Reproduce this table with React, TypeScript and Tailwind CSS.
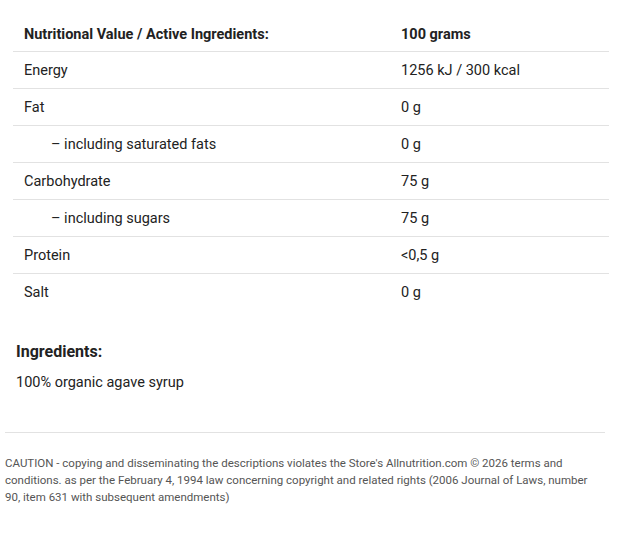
import React from "react";

const rows: [string, string, boolean][] = [
  ["Energy", "1256 kJ / 300 kcal", false],
  ["Fat", "0 g", false],
  ["– including saturated fats", "0 g", true],
  ["Carbohydrate", "75 g", false],
  ["– including sugars", "75 g", true],
  ["Protein", "<0,5 g", false],
  ["Salt", "0 g", false],
];

export default function App() {
  return (
    <div className="w-[623px] h-[534px] bg-white text-[#222] font-['Roboto',sans-serif]">
      <div className="px-[5px]">
        <div className="pl-[8px] pr-[9px] pt-[15px]">
          <table className="w-full border-collapse text-[14.5px]">
            <tbody>
              <tr className="border-b border-[#e2e2e2]">
                <td className="w-[377px] h-[36px] pl-[11px] pt-[5px] font-bold">Nutritional Value / Active Ingredients:</td>
                <td className="h-[36px] pl-[11px] pt-[5px] font-bold">100 grams</td>
              </tr>
              {rows.map(([label, value, indent], i) => (
                <tr key={label} className={i < rows.length - 1 ? "border-b border-[#e2e2e2]" : ""}>
                  <td className={"h-[37px] pt-[3px] " + (indent ? "pl-[38px]" : "pl-[11px]")}>{label}</td>
                  <td className="h-[37px] pt-[3px] pl-[11px]">{value}</td>
                </tr>
              ))}
            </tbody>
          </table>
        </div>
        <div className="pl-[11px] pt-[32px]">
          <h3 className="text-[16px] font-bold leading-[20px]">Ingredients:</h3>
          <p className="mt-[11px] text-[14.5px] leading-[20px]">100% organic agave syrup</p>
        </div>
        <div className="mt-[39px] border-t border-[#e2e2e2] w-[600px]" />
        <p className="mt-[22px] text-[11.5px] leading-[17px] text-[#555] pr-[22px]">
          CAUTION - copying and disseminating the descriptions violates the Store's Allnutrition.com © 2026 terms and conditions. as per the February 4, 1994 law concerning copyright and related rights (2006 Journal of Laws, number 90, item 631 with subsequent amendments)
        </p>
      </div>
    </div>
  );
}
